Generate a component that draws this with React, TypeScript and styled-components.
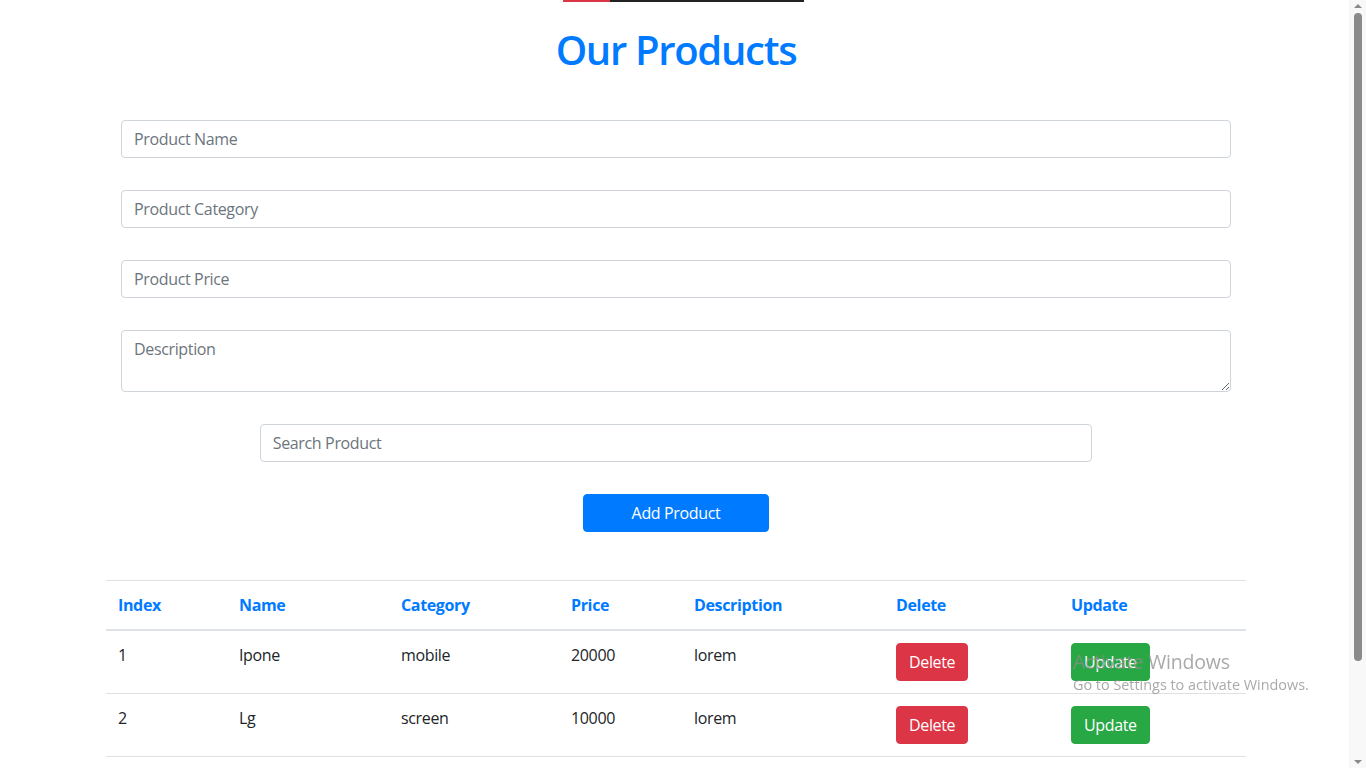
import React from "react";
import styled, { createGlobalStyle } from "styled-components";

const GlobalStyle = createGlobalStyle`
  body {
    margin: 0;
    padding-right: 14px;
    font-family: "Open Sans", "Noto Sans", Arial, sans-serif;
    font-size: 16px;
    line-height: 1.5;
    letter-spacing: -0.35px;
    color: #212529;
    background: #fff;
  }
  * { box-sizing: border-box; }
`;

const TopBar = styled.div`
  display: flex;
  width: 241px;
  height: 2px;
  margin-left: calc(50% - 113px);
`;

const BarSegment = styled.div<{ $color: string; $w: number }>`
  width: ${(p) => p.$w}px;
  background: ${(p) => p.$color};
`;

const Container = styled.div`
  max-width: 1140px;
  margin: 0 auto;
  padding-bottom: 124px;
`;

const Title = styled.h1`
  margin: 24px 0 46px;
  text-align: center;
  font-size: 40px;
  line-height: 48px;
  font-weight: 600;
  letter-spacing: -1.3px;
  color: #007bff;
`;

const Form = styled.form`
  display: flex;
  flex-direction: column;
  align-items: center;
  gap: 32px;
  padding: 0 15px;
`;

const fieldCss = `
  display: block;
  border: 1px solid #ced4da;
  border-radius: 4px;
  padding: 6px 12px;
  font-family: inherit;
  font-size: 16px;
  line-height: 24px;
  letter-spacing: -0.35px;
  color: #495057;
  background: #fff;
  outline: none;
  &::placeholder { color: #6c757d; opacity: 1; }
`;

const Input = styled.input<{ $narrow?: boolean }>`
  ${fieldCss}
  width: ${(p) => (p.$narrow ? "75%" : "100%")};
  height: 38px;
`;

const TextArea = styled.textarea`
  ${fieldCss}
  width: 100%;
  height: 62px;
  resize: vertical;
`;

const Button = styled.button<{ $variant: "primary" | "danger" | "success"; $wide?: boolean }>`
  display: inline-block;
  font-family: inherit;
  font-size: 16px;
  line-height: 24px;
  letter-spacing: -0.35px;
  padding: 6px ${(p) => (p.$wide ? "48px" : "12px")};
  border-radius: 4px;
  color: #fff;
  cursor: pointer;
  border: 1px solid
    ${(p) => (p.$variant === "primary" ? "#007bff" : p.$variant === "danger" ? "#dc3545" : "#28a745")};
  background: ${(p) => (p.$variant === "primary" ? "#007bff" : p.$variant === "danger" ? "#dc3545" : "#28a745")};
`;

const Table = styled.table`
  width: 100%;
  margin-top: 48px;
  border-collapse: collapse;
`;

const Th = styled.th<{ $w: number }>`
  width: ${(p) => p.$w}px;
  text-align: left;
  padding: 12px;
  font-weight: 700;
  color: #007bff;
  border-top: 1px solid #dee2e6;
  border-bottom: 2px solid #dee2e6;
  vertical-align: bottom;
`;

const Td = styled.td`
  padding: 12px;
  border-top: 1px solid #dee2e6;
  border-bottom: 1px solid #dee2e6;
  vertical-align: top;
`;

const ScrollTrack = styled.div`
  position: fixed;
  top: 0;
  right: 0;
  width: 17px;
  height: 100vh;
  background: #f8f8f8;
  display: flex;
  flex-direction: column;
  align-items: center;
  justify-content: space-between;
  padding: 4px 0;
`;

const ScrollThumb = styled.div`
  position: absolute;
  top: 13px;
  left: 5px;
  width: 8px;
  height: 648px;
  border-radius: 4px;
  background: #8a8a8a;
`;

const Arrow = styled.div<{ $down?: boolean }>`
  width: 0;
  height: 0;
  border-left: 4px solid transparent;
  border-right: 4px solid transparent;
  ${(p) => (p.$down ? "border-top: 4px solid #8a8a8a;" : "border-bottom: 4px solid #8a8a8a;")}
`;

const Watermark = styled.div`
  position: fixed;
  left: 1073px;
  top: 648px;
  color: rgba(140, 140, 140, 0.75);
  pointer-events: none;
  font-family: "Open Sans", "Noto Sans", sans-serif;
  letter-spacing: 0;
`;

const WatermarkTitle = styled.div`
  font-size: 19.5px;
  line-height: 27px;
  letter-spacing: -0.2px;
`;

const WatermarkSub = styled.div`
  font-size: 14.4px;
  line-height: 20px;
`;

const columns = [
  { label: "Index", w: 121 },
  { label: "Name", w: 162 },
  { label: "Category", w: 170 },
  { label: "Price", w: 123 },
  { label: "Description", w: 202 },
  { label: "Delete", w: 175 },
  { label: "Update", w: 187 },
];

const products = [
  { name: "Ipone", category: "mobile", price: 20000, desc: "lorem" },
  { name: "Lg", category: "screen", price: 10000, desc: "lorem" },
];

export default function App() {
  return (
    <>
      <GlobalStyle />
      <TopBar>
        <BarSegment $color="#dc3545" $w={47} />
        <BarSegment $color="#222" $w={194} />
      </TopBar>
      <Container>
        <Title>Our Products</Title>
        <Form onSubmit={(e) => e.preventDefault()}>
          <Input placeholder="Product Name" />
          <Input placeholder="Product Category" />
          <Input placeholder="Product Price" />
          <TextArea placeholder="Description" rows={2} />
          <Input $narrow placeholder="Search Product" />
          <Button type="button" $variant="primary" $wide>
            Add Product
          </Button>
        </Form>
        <Table>
          <thead>
            <tr>
              {columns.map((c) => (
                <Th key={c.label} $w={c.w}>
                  {c.label}
                </Th>
              ))}
            </tr>
          </thead>
          <tbody>
            {products.map((p, i) => (
              <tr key={i}>
                <Td>{i + 1}</Td>
                <Td>{p.name}</Td>
                <Td>{p.category}</Td>
                <Td>{p.price}</Td>
                <Td>{p.desc}</Td>
                <Td>
                  <Button type="button" $variant="danger">Delete</Button>
                </Td>
                <Td>
                  <Button type="button" $variant="success">Update</Button>
                </Td>
              </tr>
            ))}
          </tbody>
        </Table>
      </Container>
      <ScrollTrack>
        <Arrow />
        <ScrollThumb />
        <Arrow $down />
      </ScrollTrack>
      <Watermark>
        <WatermarkTitle>Activate Windows</WatermarkTitle>
        <WatermarkSub>Go to Settings to activate Windows.</WatermarkSub>
      </Watermark>
    </>
  );
}
